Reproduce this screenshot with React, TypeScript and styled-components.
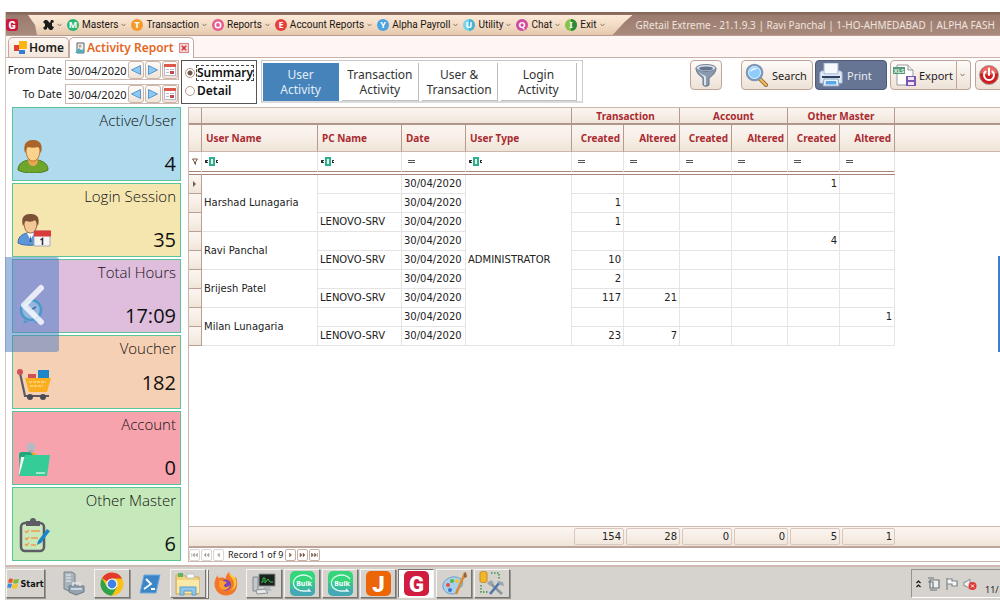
import React from "react";
import styled, { createGlobalStyle, css } from "styled-components";

const Global = createGlobalStyle`
  *, *::before, *::after { box-sizing: border-box; }
  html, body { margin: 0; background: #fff; }
  body { overflow-x: hidden; font-family: "Noto Sans", "Open Sans", sans-serif; font-size: 11px; color: #222; }
  button, input { font: inherit; color: inherit; margin: 0; padding: 0; border: 0; background: none; border-radius: 0; }
  button { cursor: pointer; white-space: nowrap; }
  svg { display: block; flex: none; }
`;

/* ---------- window frame ---------- */

const Page = styled.div`
  position: relative;
  display: flex;
  flex-direction: column;
  min-height: 100vh;
  padding: 12px 0 0 5px;
  overflow: hidden;
`;

const Window = styled.main`
  flex: 1;
  display: flex;
  flex-direction: column;
  border-left: 1px solid #d9c8c0;
`;

const TitleBar = styled.header`
  display: flex;
  height: 24px;
  padding-top: 3px;
  background: linear-gradient(#86695c 0, #86695c 2px, #9a7b6e 3px, #a98b7d 100%);
  border-bottom: 1px solid #b79d91;
`;

const AppButton = styled.button`
  flex: none;
  width: 22px;
  height: 20px;
`;

const MenuBar = styled.nav`
  display: flex;
  flex: none;
  align-items: center;
  gap: 5px;
  height: 20px;
  padding: 0 28px 0 15px;
  background: linear-gradient(#fbe9d8, #f3dcc5 50%, #e4c8ac);
  clip-path: polygon(0 0, 100% 0, calc(100% - 8px) 35%, calc(100% - 20px) 100%, 9px 100%, 7px 50%);
`;

const MenuItem = styled.button`
  display: flex;
  align-items: center;
  gap: 3px;
  height: 20px;
  font-family: Roboto, sans-serif;
  font-size: 10px;
  line-height: 14px;
  color: #1b1512;
`;

const TitleText = styled.h1`
  flex: 1;
  margin: 0 0 0 3px;
  font-size: 10px;
  font-weight: 400;
  line-height: 20px;
  white-space: nowrap;
  color: #f0e4de;
`;

const TabStrip = styled.div`
  display: flex;
  align-items: flex-end;
  height: 22px;
  padding-left: 2px;
  background: #fdf6f5;
  border-bottom: 1px solid #c9b1a8;
`;

const DocTab = styled.button<{ $active?: boolean }>`
  display: flex;
  align-items: center;
  gap: 2px;
  height: ${(p) => (p.$active ? 21 : 20)}px;
  padding: 0 4px 0 5px;
  margin-bottom: ${(p) => (p.$active ? -1 : 0)}px;
  border: 1px solid #c3a89d;
  border-bottom: 0;
  border-radius: 5px 5px 0 0;
  background: ${(p) => (p.$active ? "#fff" : "linear-gradient(#fdf8f3, #f3e6da)")};
  color: ${(p) => (p.$active ? "#e3661d" : "#1c1c1c")};
  font-size: 12px;
  font-weight: 600;
  line-height: 16px;
`;

/* ---------- toolbar ---------- */

const Toolbar = styled.div`
  display: flex;
  align-items: flex-start;
  height: 49px;
  padding-top: 2px;
  > * { flex: none; }
`;

const DateFilters = styled.div`
  display: grid;
  grid-template-columns: 56px 114px;
  grid-auto-rows: 20px;
  column-gap: 3px;
  row-gap: 4px;
  margin-right: 2px;
`;

const DateLabel = styled.label`
  text-align: right;
  white-space: nowrap;
  line-height: 20px;
`;

const DateBox = styled.div`
  display: flex;
  align-items: center;
  gap: 1px;
  border: 1px solid #cdb9b0;
  padding-left: 2px;
`;

const DateInput = styled.input`
  width: 59px;
  height: 18px;
  outline: 0;
`;

const MiniButton = styled.button`
  display: grid;
  place-items: center;
  width: 16px;
  height: 18px;
  border: 1px solid #cdb4a8;
  border-radius: 3px;
  background: linear-gradient(#fefcfa, #efe3d8);
`;

const RadioGroup = styled.fieldset`
  width: 76px;
  height: 44px;
  margin: 0 4px 0 0;
  padding: 3px;
  border: 1px solid #555;
  min-width: 0;
`;

const RadioLabel = styled.label<{ $focus?: boolean }>`
  display: flex;
  align-items: center;
  gap: 2px;
  height: 18px;
  font-size: 12px;
  font-weight: 600;
  color: #111;
  span {
    line-height: 14px;
    outline: ${(p) => (p.$focus ? "1px dashed #444" : "0")};
  }
`;

const Radio = styled.input`
  appearance: none;
  flex: none;
  width: 10px;
  height: 10px;
  border: 1px solid #b49a8e;
  border-radius: 50%;
  background: #fff;
  &:checked { background: radial-gradient(#6d574d 0 2px, #fff 3px); }
`;

const ViewTabs = styled.div`
  display: flex;
  gap: 3px;
  width: 322px;
  height: 43px;
  padding: 2px 5px 2px 1px;
  border: 1px solid #c9c9c9;
  border-bottom: 2px solid #dadada;
`;

const ViewTab = styled.button<{ $active?: boolean }>`
  flex: 1;
  height: 38px;
  white-space: pre-line;
  font-size: 12px;
  line-height: 15px;
  color: ${(p) => (p.$active ? "#e4eef8" : "#333")};
  background: ${(p) => (p.$active ? "#4683bb" : "#fff")};
  border-right: 1px solid ${(p) => (p.$active ? "#4683bb" : "#bdbdbd")};
  border-bottom: 1px solid ${(p) => (p.$active ? "#4683bb" : "#bdbdbd")};
`;

const Actions = styled.div`
  display: flex;
  flex: none;
  margin-left: 107px;
`;

const ToolButton = styled.button<{ $dark?: boolean; $w: number; $mr?: number }>`
  display: flex;
  flex: none;
  align-items: center;
  gap: 4px;
  width: ${(p) => p.$w}px;
  height: 30px;
  margin-right: ${(p) => p.$mr ?? 3}px;
  padding: 0 3px;
  border: 1px solid ${(p) => (p.$dark ? "#4f5b76" : "#bfa598")};
  border-radius: 4px;
  background: ${(p) => (p.$dark ? "#667593" : "linear-gradient(#fefaf7, #ede2d7)")};
  color: ${(p) => (p.$dark ? "#e6ebf3" : "#1c1c1c")};
`;

const SplitButton = styled.div`
  display: flex;
  margin-right: 4px;
  > :first-child { gap: 2px; padding-left: 2px; margin-right: 0; border-radius: 4px 0 0 4px; }
  > :last-child { border-left: 0; margin-right: 0; border-radius: 0 4px 4px 0; }
`;

/* ---------- tiles ---------- */

const Body = styled.div`
  flex: 1;
  display: flex;
  gap: 7px;
  padding: 0 0 3px 6px;
  border-bottom: 2px solid #ceb9b0;
`;

const Tiles = styled.aside`
  display: flex;
  flex-direction: column;
  gap: 2px;
  width: 169px;
  flex: none;
  padding-bottom: 1px;
`;

const Tile = styled.section<{ $bg: string; $middle?: boolean }>`
  flex: 1;
  display: grid;
  grid-template-columns: 36px 1fr;
  grid-template-rows: 20px 1fr;
  align-items: end;
  min-height: 74px;
  padding: 2px 4px 1px;
  border: 1px solid #5cc596;
  background: ${(p) => p.$bg};
  text-align: right;
  color: #111;
  svg { margin-bottom: 6px; }
  p { align-self: ${(p) => (p.$middle ? "center" : "end")}; }
`;

const TileTitle = styled.h2`
  grid-column: 1 / -1;
  align-self: start;
  margin: 0;
  font: 300 15px/20px "Open Sans", "Noto Sans", sans-serif;
`;

const TileValue = styled.p`
  margin: 0;
  font: 400 20px/30px "Open Sans", "Noto Sans", sans-serif;
`;

/* ---------- grid ---------- */

const GridPanel = styled.section`
  flex: 1;
  min-width: 0;
  display: flex;
  flex-direction: column;
  border: 1px solid #cdb6ac;
  border-right: 0;
`;

const headFill = css`background: linear-gradient(#fbf5f1, #f7efe7 50%, #efe4d8);`;

const Table = styled.table`
  width: 100%;
  table-layout: fixed;
  border-collapse: separate;
  border-spacing: 0;
  font: 10px/14px "DejaVu Sans", sans-serif;
  color: #222;
  td, th { padding: 0 3px; overflow: hidden; white-space: nowrap; text-align: left; }
`;

const BandCell = styled.th`
  height: 17px;
  && { text-align: center; }
  ${headFill}
  font: 700 10px/14px "Noto Sans", sans-serif;
  color: #a92b31;
  border-right: 1px solid #b59a90;
  border-bottom: 2px solid #b3968a;
  &:last-child { border-right: 0; }
`;

const HeadCell = styled.th<{ $num?: boolean }>`
  height: 27px;
  && { text-align: ${(p) => (p.$num ? "right" : "left")}; padding: 0 3px 0 4px; }
  ${headFill}
  font: 700 10px/14px "Noto Sans", sans-serif;
  color: #a92b31;
  border-right: 1px solid #b59a90;
  border-bottom: 1px solid #cdb6ac;
  &:last-child { border-right: 0; }
`;

const FilterCell = styled.td<{ $blank?: boolean; $equal?: boolean }>`
  height: 23px;
  && { padding-left: ${(p) => (p.$equal ? 6 : 3)}px; }
  border-right: 1px solid ${(p) => (p.$blank ? "transparent" : "#e6e2e0")};
  border-bottom: ${(p) => (p.$blank ? "0" : "4px double #a58579")};
`;

const Cell = styled.td<{ $num?: boolean }>`
  height: 19px;
  && { text-align: ${(p) => (p.$num ? "right" : "left")}; padding: 0 2px; }
  border-right: 1px solid #e6e4e3;
  border-bottom: 1px solid #e6e4e3;
`;

const MarkCell = styled.td`
  && { padding: 0 0 0 4px; }
  ${headFill}
  border-right: 1px solid #b99f94;
  border-bottom: 1px solid #b99f94;
`;

const Spacer = styled.div`flex: 1;`;

const Summary = styled.div`
  ${headFill}
  height: 22px;
  border-top: 1px solid #cdb6ac;
  border-bottom: 2px solid #bda398;
`;

const Total = styled.output`
  display: block;
  height: 17px;
  margin: 1px 0 0 2px;
  padding-right: 2px;
  border: 1px solid #d9c6bc;
  border-radius: 2px;
  line-height: 15px;
  text-align: right;
`;

const TotalCell = styled.td`
  && { padding: 0; }
`;

const Navigator = styled.nav`
  display: flex;
  align-items: center;
  gap: 1px;
  height: 13px;
  font-size: 9px;
  line-height: 12px;
  color: #222;
  span { margin: 0 1px 0 3px; white-space: nowrap; }
`;

const NavButton = styled.button<{ $off?: boolean }>`
  width: 11px;
  height: 12px;
  border: 1px solid ${(p) => (p.$off ? "#ddd5d1" : "#c9aea2")};
  border-radius: 2px;
  color: ${(p) => (p.$off ? "#a8a3a0" : "#7b5a4d")};
`;

/* ---------- carousel arrows over the window ---------- */

const PrevArrow = styled.button`
  position: absolute;
  left: 5px;
  top: 257px;
  display: grid;
  place-items: center;
  width: 54px;
  height: 95px;
  border-radius: 0 3px 3px 0;
  background: rgba(70, 120, 195, 0.5);
`;

const NextArrow = styled.button`
  position: absolute;
  right: 0;
  top: 256px;
  width: 2px;
  height: 96px;
  background: #3f7ecb;
`;

/* ---------- taskbar ---------- */

const Taskbar = styled.footer`
  display: flex;
  align-items: center;
  height: 33px;
  gap: 2px;
  padding-left: 1px;
  background: #d6d3cf;
`;

const raised = css`
  border: 1px solid;
  border-color: #f6f5f3 #77736f #77736f #f6f5f3;
  box-shadow: 1px 1px 0 #9a9692;
`;

const StartButton = styled.button`
  display: flex;
  align-items: center;
  justify-content: center;
  gap: 1px;
  width: 39px;
  height: 29px;
  margin-right: 9px;
  font: 700 9px/12px "DejaVu Sans Condensed", "DejaVu Sans", sans-serif;
  color: #111;
  ${raised}
`;

const TaskButton = styled.button<{ $look: "flat" | "raised" | "pressed" | "stack" }>`
  display: grid;
  place-items: center;
  width: 36px;
  height: 29px;
  ${(p) => (p.$look === "raised" || p.$look === "stack") && raised}
  ${(p) => p.$look === "stack" && css`box-shadow: 1px 0 0 #d6d3cf, 2px 0 0 #f6f5f3, 3px 1px 0 #77736f;`}
  ${(p) =>
    p.$look === "pressed" &&
    css`
      background: #fff;
      border: 1px solid;
      border-color: #77736f #f6f5f3 #f6f5f3 #77736f;
    `}
`;

const Tray = styled.div`
  display: flex;
  align-items: center;
  gap: 5px;
  width: 89px;
  height: 29px;
  margin-left: auto;
  padding-left: 3px;
  border: 1px solid;
  border-color: #96928e #96928e #fff #96928e;
  border-right: 0;
  time { align-self: flex-end; margin-left: 3px; font: 9px/14px "Noto Sans", sans-serif; white-space: nowrap; }
`;

/* ---------- drawings ---------- */

const Caret = () => (
  <svg width="5" height="4" viewBox="0 0 5 4"><path d="M.5.8 2.5 3 4.5.8" fill="none" stroke="#8c7767" /></svg>
);

const Letter = ({ c, bg, half, ring }: { c: string; bg: string; half?: string; ring?: boolean }) => (
  <svg width="12" height="12" viewBox="0 0 12 12">
    <circle cx="6" cy="6" r="6" fill={bg} />
    {half && <path d="M6 0a6 6 0 0 1 0 12z" fill={half} />}
    {ring ? (
      <circle cx="6" cy="6" r="2.7" fill={bg} stroke="#fff" strokeWidth="1.6" />
    ) : (
      <text x="6" y="9.4" textAnchor="middle" fontFamily="Noto Sans, sans-serif" fontWeight="700" fontSize="9" fill="#fff">{c}</text>
    )}
  </svg>
);

const Tri = ({ left }: { left?: boolean }) => (
  <svg width="12" height="12" viewBox="0 0 12 12">
    <path d={left ? "M10.5 1.5v9L1.5 6z" : "M1.5 1.5v9L10.5 6z"} fill="#8cc8f2" stroke="#5a96cf" />
  </svg>
);

const Calendar = () => (
  <svg width="12" height="12" viewBox="0 0 12 12">
    <rect x=".5" y=".5" width="11" height="11" fill="#fff" stroke="#b9b9c4" />
    <path d="M0 0h12v3H0z" fill="#dd5a4b" />
    <path d="M2 5h3v1H2zM2 8h3v1H2zM6 5h4v1H6z" fill="#b8bfd4" />
    <path d="M6 7h4v3H6z" fill="#c74646" />
  </svg>
);

const Funnel = () => (
  <svg width="24" height="24" viewBox="0 0 24 24">
    <path d="M2 5c0 5 4 8 7 10v7c1 1.600 5 1.600 6 0v-7c3-2 7-5 7-10z" fill="#8a99ad" stroke="#66758a" />
    <path d="M4 8c2 3 4 4 6 6v8h2V14c0-2-5-2-8-6z" fill="#dce4ee" />
    <ellipse cx="12" cy="5" rx="10" ry="3.500" fill="#d4dde8" stroke="#74849a" />
    <ellipse cx="12" cy="5.500" rx="7" ry="2" fill="#65758b" />
  </svg>
);

const Magnifier = () => (
  <svg width="23" height="24" viewBox="0 0 23 24">
    <path d="m14 15 7 7" stroke="#8a6a3c" strokeWidth="4" strokeLinecap="round" />
    <path d="m15 16 6 6" stroke="#f0b85a" strokeWidth="2.400" strokeLinecap="round" />
    <circle cx="9.500" cy="9.500" r="7.800" fill="#6db4f2" stroke="#7f95b5" strokeWidth="2" />
    <circle cx="9.500" cy="9.500" r="6" fill="#8fcbfb" stroke="#e4f1fd" />
    <path d="M5 9c1-4 5-5 8-3-3 0-5 1-8 3z" fill="#f3faff" />
  </svg>
);

const Printer = () => (
  <svg width="24" height="24" viewBox="0 0 24 24">
    <path d="M5 0h14v11H5z" fill="#f5f8fd" stroke="#a9b9d0" />
    <path d="M1 10c0-1 1-2 2-2h2v3h14V8h2c1 0 2 1 2 2v10H1z" fill="#dfe9f6" stroke="#b4c4dc" />
    <path d="M3 13h18v2H3z" fill="#2d3f5e" />
    <path d="M5 16h14l1 7H4z" fill="#eef4fc" stroke="#8fa4c4" />
    <path d="M7 18h10l.6 3.500H6.400z" fill="#58a7ec" />
  </svg>
);

const ExportIcon = () => (
  <svg width="24" height="22" viewBox="0 0 24 22">
    <path d="M4 1h11l5 5v15H4z" fill="#fff" stroke="#9a9a9a" />
    <path d="M15 1v5h5" fill="#eee" stroke="#9a9a9a" />
    <path d="M0 3h12v7H0z" fill="#559a78" />
    <text x="6" y="8.800" textAnchor="middle" fontFamily="Noto Sans, sans-serif" fontWeight="700" fontSize="6" fill="#e3f4ea">XLS</text>
    <path d="M13 12h10v10H13z" fill="#7d55b5" />
    <path d="M15 13h6v3h-6zM15 18h6v3h-6z" fill="#efe6fb" />
  </svg>
);

const Power = () => (
  <svg width="20" height="20" viewBox="0 0 20 20">
    <circle cx="10" cy="10" r="9.500" fill="#cf1d20" stroke="#a3a3a3" />
    <path d="M2 8a8 7 0 0 1 16 0c-5 2-11 2-16 0z" fill="#ea6a63" />
    <path d="M6.500 6.500a5 5 0 1 0 7 0M10 3.500V10" fill="none" stroke="#fff" strokeWidth="2" strokeLinecap="round" />
  </svg>
);

const HomeIcon = () => (
  <svg width="13" height="13" viewBox="0 0 13 13">
    <path d="M5 0h8v8H5z" fill="#fbb515" /><path d="M0 4h5v6H0z" fill="#e5402b" /><path d="M5 9h6v4H5z" fill="#2f7fd2" />
  </svg>
);

const ReportIcon = () => (
  <svg width="10" height="12" viewBox="0 0 10 12">
    <path d="M2 1h7v10H2z" fill="#eef3f6" stroke="#555f66" /><path d="M0 11 4 6l2 2 3-1v4z" fill="#58aab6" /><circle cx="5" cy="4" r="1.500" fill="#c9a17c" />
  </svg>
);

const CloseIcon = () => (
  <svg width="10" height="10" viewBox="0 0 9 9">
    <rect x=".5" y=".5" width="8" height="8" fill="#f9dcdb" stroke="#dc8180" /><path d="m2.500 2.500 4 4m0-4-4 4" stroke="#cf3838" strokeWidth="1.400" />
  </svg>
);

const Person = () => (
  <svg width="32" height="34" viewBox="0 0 32 34">
    <path d="M1 31c0-7 6-9 10-10h10c4 1 10 3 10 10-6 4-24 4-30 0z" fill="#6fa52c" stroke="#4c7d1b" />
    <path d="M11 19h10c0 6-2 8-5 8s-5-2-5-8z" fill="#e9a552" />
    <path d="M9 10c0-5 14-5 14 0 0 8-3 12-7 12s-7-4-7-12z" fill="#fbd28c" stroke="#b9762f" />
    <path d="M8 14C5 2 13 1 16 1s11 1 8 13c-1-1-1-5-3-6-3 1-7 1-10 0-2 1-2 5-3 6z" fill="#a9642b" />
  </svg>
);

const PersonCalendar = () => (
  <svg width="34" height="36" viewBox="0 0 34 36">
    <path d="M1 30c0-7 5-9 9-10h7c4 1 8 3 8 10-5 3-19 3-24 0z" fill="#5d97d8" stroke="#3a6cab" />
    <path d="m10 20 3.500 7 3.500-7z" fill="#fff" /><path d="m13.500 22 1 7h-2z" fill="#35558a" />
    <path d="M7 9c0-4 13-4 13 0 0 8-3 11-6.500 11S7 17 7 9z" fill="#f3c796" stroke="#9a6a46" />
    <path d="M6 13C3 2 10 1 13.500 1S24 2 21 13c-1-1-1-4-3-6-3 2-5 2-9 1-2 1-2 4-3 5z" fill="#7d5136" />
    <path d="M17 18h16v15H17z" fill="#f5f5f8" stroke="#a8a8b2" /><path d="M17 17.500h17v6H17z" fill="#d93a3a" />
    <path d="m23.500 27 2-1.500V32" fill="none" stroke="#333" strokeWidth="1.500" />
  </svg>
);

const Clock = () => (
  <svg width="34" height="36" viewBox="0 0 34 36">
    <path d="M8 31 6 34h5zM19 31l3 3h-5z" fill="#4cbcd2" />
    <circle cx="14" cy="21" r="10" fill="#e6f4fa" stroke="#4bbcd0" strokeWidth="2.500" />
    <path d="m10 17 4 4 5-3" fill="none" stroke="#3c5f80" strokeWidth="1.500" />
  </svg>
);

const Cart = () => (
  <svg width="34" height="32" viewBox="0 0 34 32">
    <path d="M21 1h11v8H21z" fill="#1c86cb" /><path d="M11 5h8v5h-8z" fill="#cf5059" />
    <path d="M8 9h26l-4 14H12z" fill="#fbaf1e" />
    <path d="M12 13h17M13 17h13" stroke="#fdd68a" strokeWidth="1.500" strokeDasharray="3 1" />
    <path d="M3 4 8 27h24" fill="none" stroke="#5c5964" strokeWidth="2.200" />
    <circle cx="3" cy="3" r="3" fill="#cf5059" /><circle cx="13" cy="28" r="3" fill="#4c4954" /><circle cx="26" cy="28" r="3" fill="#4c4954" />
  </svg>
);

const Folder = () => (
  <svg width="34" height="36" viewBox="0 0 34 36">
    <circle cx="14" cy="6" r="4.500" fill="#b6b9c2" /><path d="M7 18c0-9 14-9 14 0z" fill="#f6a51e" /><path d="M11 9h6l-3 4z" fill="#a7abb6" />
    <path d="M2 14c0-2 1-3 3-3h8l3 3h14v20H3z" fill="#22a67b" /><path d="M4 16h24v17H2z" fill="#f2fbf7" />
    <path d="M8 14h25l-3 21H2z" fill="#35cc97" /><path d="M19 32h9" stroke="#c5f3e2" strokeWidth="1.500" />
  </svg>
);

const Clipboard = () => (
  <svg width="34" height="36" viewBox="0 0 34 36">
    <rect x="4" y="6" width="23" height="28" rx="4" fill="#c9e9bd" stroke="#5d5b66" strokeWidth="2.500" />
    <path d="M9 9V4h4a3 3 0 0 1 6 0h4v5z" fill="#5d5b66" />
    <path d="m8 14 1.500 1.500L12 13m-4 8 1.500 1.500L12 20m-4 7 1.500 1.500L12 26M14 14h9M14 21h7M14 28h5" fill="none" stroke="#ef9a4d" strokeWidth="1.400" />
    <path d="m21 24 9-12 3 2-9 12-4 2z" fill="#1c86cb" />
  </svg>
);

const AbcIcon = () => (
  <svg width="14" height="9" viewBox="0 0 14 9">
    <path d="M4 0h6v9H4z" fill="#2fae8d" /><path d="M6 2h2v5H6z" fill="#dff5ee" />
    <path d="M0 3h3v1H2v1h1v1H0zM11 3h2v1h-1v1h1v1h-2z" fill="#333" />
  </svg>
);

const EqualIcon = () => (
  <svg width="8" height="5" viewBox="0 0 8 5"><path d="M0 1h7v1H0zM0 3h7v1H0z" fill="#555" /></svg>
);

const WindowsFlag = () => (
  <svg width="12" height="12" viewBox="0 0 12 12">
    <path d="M2 1c2-1 3 0 4 0L5 5c-1 0-2-1-4 0z" fill="#e8542b" /><path d="M7 1c2 1 3 0 5 0l-1 4c-2 1-3 1-5 0z" fill="#80bb35" />
    <path d="M1 6c2-1 3 0 4 0l-1 4c-1 0-2-1-4 0z" fill="#3d8bd8" /><path d="M6 6c2 1 3 0 5 0l-1 4c-2 1-3 1-5 0z" fill="#f8c22c" />
  </svg>
);

const Server = () => (
  <svg width="24" height="25" viewBox="0 0 24 25">
    <path d="M2 1h8l3 2v16l-3 2-8-3z" fill="#a8b2ba" stroke="#7a858e" /><path d="M4 4h5M4 7h5M4 10h5" stroke="#eef3f6" />
    <path d="M7 15h15v6l-8 3-7-3z" fill="#93a3b0" stroke="#6d7a85" /><path d="M11 15v-3h7v3M9 18h11" fill="none" stroke="#dfe6ec" strokeWidth="1.500" />
  </svg>
);

const Chrome = () => (
  <svg width="24" height="24" viewBox="0 0 24 24">
    <circle cx="12" cy="12" r="11.500" fill="#fbc116" />
    <path d="M12 12 2 6.300A11.500 11.500 0 0 1 22 6.500H12z" fill="#e23b2e" />
    <path d="M2 6.300A11.500 11.500 0 0 0 12 23.500l5-8.500H7z" fill="#2fa24c" />
    <circle cx="12" cy="12" r="5.600" fill="#fff" /><circle cx="12" cy="12" r="4.400" fill="#3e82e8" />
  </svg>
);

const PowerShell = () => (
  <svg width="22" height="20" viewBox="0 0 22 20">
    <path d="M5 1h16l-4 18H1z" fill="#3c86c8" stroke="#6cabe0" /><path d="m7 5 5 5-7 5M12 15h4" fill="none" stroke="#fff" strokeWidth="1.800" />
  </svg>
);

const Explorer = () => (
  <svg width="26" height="24" viewBox="0 0 26 24">
    <path d="M1 3h8l2 2h13v17H1z" fill="#f2d37c" stroke="#d2a94a" /><path d="M3 1h5v4H3z" fill="#5db36a" /><path d="M12 2h7v4h-7z" fill="#fff" stroke="#b9c4ce" />
    <path d="M2 8h22v13H2z" fill="#fbe9aa" /><path d="M5 23v-8h16v8h-4v-4H9v4z" fill="#8fc6ea" stroke="#5a9fcd" />
  </svg>
);

const Firefox = () => (
  <svg width="24" height="24" viewBox="0 0 24 24">
    <path d="M12 23.500C5 23.500.5 18 .5 12c0-4 2-7 3-9 0 2 1 3 2 3 3-1 5 0 6 1 0-3 2-6 4-7 0 3 3 4 5 7 1-1 1-2 1-3 4 9 1 19.500-9.500 19.500z" fill="#f4762a" />
    <path d="M15 1c0 4 5 5 5 11 0 3-2 6-5 7 7-1 9-8 6-13-1-2-5-3-6-5z" fill="#fcc832" /><circle cx="11.500" cy="13" r="5.500" fill="#7347b8" />
    <path d="M5 9c3-2 5 1 8 1-1 2-3 2-3 4 1 2 4 1 6-1-1 6-9 7-11 1z" fill="#fb9d2f" />
  </svg>
);

const Terminal = () => (
  <svg width="25" height="22" viewBox="0 0 25 22">
    <path d="M7 1h16v12H7z" fill="#1b231f" stroke="#8a9094" /><path d="M9 9h2V5h2v5l3-4 2 3h3" fill="none" stroke="#33c24b" />
    <path d="M12 14h6l2 4h-9z" fill="#b5babd" /><path d="M1 4h5v14H1z" fill="#c3c9cd" stroke="#80878c" /><path d="m4 17 9-1 3 4-11 1z" fill="#e6e9eb" stroke="#8b9195" />
  </svg>
);

const Bulk = () => (
  <svg width="25" height="25" viewBox="0 0 25 25">
    <rect width="25" height="25" rx="5" fill="#35d57c" /><path d="M0 17h25v3a5 5 0 0 1-5 5H5a5 5 0 0 1-5-5z" fill="#45a9b5" /><path d="M0 12h25v6H0z" fill="#38bf98" />
    <path d="M22 8A10 8 0 1 0 14 20h6l-2-2" fill="none" stroke="#dff8ee" strokeWidth="1.300" />
    <text x="14" y="15" textAnchor="middle" fontFamily="Noto Sans, sans-serif" fontWeight="700" fontSize="7" fill="#fff">Bulk</text>
  </svg>
);

const Badge = ({ c, bg, s = 25 }: { c: string; bg: string; s?: number }) => (
  <svg width={s} height={s} viewBox="0 0 25 25">
    <rect width="25" height="25" rx="5" fill={bg} />
    <text x="12.500" y="20.500" textAnchor="middle" fontFamily="Roboto, sans-serif" fontWeight="900" fontSize="22" fill="#fff">{c}</text>
  </svg>
);

const Palette = () => (
  <svg width="25" height="24" viewBox="0 0 25 24">
    <path d="M1 14C1 8 8 4 14 5c6 1 8 5 6 9-1 2-4 1-5 3s0 5-4 5C5 22 1 19 1 14z" fill="#a8d0ec" stroke="#6b9fc6" />
    <circle cx="6" cy="13" r="2" fill="#e2503f" /><circle cx="10" cy="9" r="2" fill="#58b14a" /><circle cx="15" cy="9" r="2" fill="#f3c32f" /><circle cx="8" cy="18" r="2" fill="#3d74cf" />
    <path d="m23 1-9 21" stroke="#d98a33" strokeWidth="2.500" /><path d="m22 1 2-1 1 5-3 1z" fill="#9b6430" />
  </svg>
);

const DbTools = () => (
  <svg width="26" height="25" viewBox="0 0 26 25">
    <path d="M1 2c0-2 7-2 7 0v8c0 2-7 2-7 0z" fill="#f0b62c" stroke="#c98b16" /><path d="M12 2h8v6M2 14v7h8" fill="none" stroke="#3d9145" strokeWidth="1.500" strokeDasharray="1.500 1.500" />
    <path d="m11 12 12 11" stroke="#8a949d" strokeWidth="2.600" /><path d="M21 11 11 23" stroke="#4f78a8" strokeWidth="2.600" /><path d="m8 12 4-3 3 3-4 3zM18 10l6 1 1 4-4-1z" fill="#9aa5ae" />
  </svg>
);

const TrayIcons = () => (
  <>
    <svg width="7" height="9" viewBox="0 0 7 9"><path d="m1.500 4 2-2 2 2m-4 4 2-2 2 2" fill="none" stroke="#111" strokeWidth="1.200" /></svg>
    <svg width="13" height="14" viewBox="0 0 13 14"><path d="M3 3h9v8H3zM1 1h6M3 13h7M1 5h5v6" fill="#eef0f1" stroke="#6c7276" strokeWidth="1.200" /></svg>
    <svg width="13" height="14" viewBox="0 0 13 14"><path d="M2 1v12M2 2h5v2h5v5H7V7H2" fill="#f7f7f7" stroke="#7f8589" strokeWidth="1.200" /></svg>
    <svg width="14" height="14" viewBox="0 0 14 14"><path d="M1 5h2l4-3v10L3 9H1z" fill="#f2f2f2" stroke="#85898c" /><circle cx="9.500" cy="9" r="4" fill="#dd3a35" /><path d="m8 7.500 3 3m0-3-3 3" stroke="#fff" /></svg>
  </>
);

/* ---------- data ---------- */

const menus = [
  { label: "Masters", icon: <Letter c="M" bg="#2fb573" /> },
  { label: "Transaction", icon: <Letter c="T" bg="#f39a2b" /> },
  { label: "Reports", icon: <Letter c="O" bg="#e65a8e" ring /> },
  { label: "Account Reports", icon: <Letter c="E" bg="#e8403c" /> },
  { label: "Alpha Payroll", icon: <Letter c="Y" bg="#4ba3e0" /> },
  { label: "Utility", icon: <Letter c="U" bg="#79d3e8" half="#45b3d6" /> },
  { label: "Chat", icon: <Letter c="Q" bg="#cf4a9d" /> },
  { label: "Exit", icon: <Letter c="I" bg="#84c441" half="#2c8a3c" /> },
];

const views = ["User\nActivity", "Transaction\nActivity", "User &\nTransaction", "Login\nActivity"];

const tiles = [
  { title: "Active/User", value: "4", bg: "#b0daed", icon: <Person /> },
  { title: "Login Session", value: "35", bg: "#f5e6b0", icon: <PersonCalendar /> },
  { title: "Total Hours", value: "17:09", bg: "#dfbedd", icon: <Clock /> },
  { title: "Voucher", value: "182", bg: "#f6d0b4", icon: <Cart />, middle: true },
  { title: "Account", value: "0", bg: "#f7a3ae", icon: <Folder /> },
  { title: "Other Master", value: "6", bg: "#c6e9bb", icon: <Clipboard /> },
];

const columnWidths = [13, 116, 84, 64, 106, 52, 56, 52, 56, 52, 55];
const D = "30/04/2020";
const PC = "LENOVO-SRV";

type Row = { user?: string; span?: number; pc: string; n: string[] };
const rows: Row[] = [
  { user: "Harshad Lunagaria", span: 3, pc: "", n: ["", "", "", "", "1", ""] },
  { pc: "", n: ["1", "", "", "", "", ""] },
  { pc: PC, n: ["1", "", "", "", "", ""] },
  { user: "Ravi Panchal", span: 2, pc: "", n: ["", "", "", "", "4", ""] },
  { pc: PC, n: ["10", "", "", "", "", ""] },
  { user: "Brijesh Patel", span: 2, pc: "", n: ["2", "", "", "", "", ""] },
  { pc: PC, n: ["117", "21", "", "", "", ""] },
  { user: "Milan Lunagaria", span: 2, pc: "", n: ["", "", "", "", "", "1"] },
  { pc: PC, n: ["23", "7", "", "", "", ""] },
];

const totals = ["154", "28", "0", "0", "5", "1"];

const Columns = () => (
  <colgroup>
    {columnWidths.map((w, i) => <col key={i} width={w} />)}
    <col />
  </colgroup>
);

const DateRow = ({ id, label }: { id: string; label: string }) => (
  <>
    <DateLabel htmlFor={id}>{label}</DateLabel>
    <DateBox>
      <DateInput id={id} defaultValue={D} />
      <MiniButton aria-label="Previous day"><Tri left /></MiniButton>
      <MiniButton aria-label="Next day"><Tri /></MiniButton>
      <MiniButton aria-label="Pick a date"><Calendar /></MiniButton>
    </DateBox>
  </>
);

const NavArrow = ({ label, d, off }: { label: string; d: string; off?: boolean }) => (
  <NavButton aria-label={label} $off={off} disabled={off}>
    <svg width="9" height="10" viewBox="0 0 9 10"><path d={d} fill="currentColor" stroke="currentColor" strokeWidth=".5" /></svg>
  </NavButton>
);

const ActivityGrid = () => (
  <GridPanel>
    <Table>
      <Columns />
      <thead>
        <tr>
          <BandCell />
          <BandCell colSpan={4} />
          <BandCell colSpan={2}>Transaction</BandCell>
          <BandCell colSpan={2}>Account</BandCell>
          <BandCell colSpan={2}>Other Master</BandCell>
          <BandCell />
        </tr>
        <tr>
          <HeadCell />
          {["User Name", "PC Name", "Date", "User Type"].map((h) => <HeadCell key={h}>{h}</HeadCell>)}
          {totals.map((_, i) => <HeadCell key={i} $num>{i % 2 ? "Altered" : "Created"}</HeadCell>)}
          <HeadCell />
        </tr>
      </thead>
      <tbody>
        <tr>
          <FilterCell>
            <svg width="6" height="7" viewBox="0 0 6 7"><path d="M.5 1h5L3.500 4v2.500l-1-1V4z" fill="none" stroke="#7b5a4d" /></svg>
          </FilterCell>
          {[true, true, false, true, false, false, false, false, false, false].map((abc, i) => (
            <FilterCell key={i} $equal={!abc}>{abc ? <AbcIcon /> : <EqualIcon />}</FilterCell>
          ))}
          <FilterCell $blank />
        </tr>
        {rows.map((r, i) => (
          <tr key={i}>
            <MarkCell>
              {i === 0 && <svg width="4" height="6" viewBox="0 0 4 6"><path d="M0 0v6l3-3z" fill="#7b5a4d" /></svg>}
            </MarkCell>
            {r.user && <Cell rowSpan={r.span}>{r.user}</Cell>}
            <Cell>{r.pc}</Cell>
            <Cell>{D}</Cell>
            {i === 0 && <Cell rowSpan={rows.length}>ADMINISTRATOR</Cell>}
            {r.n.map((v, k) => <Cell key={k} $num>{v}</Cell>)}
          </tr>
        ))}
      </tbody>
    </Table>
    <Spacer />
    <Summary>
      <Table>
        <Columns />
        <tbody>
          <tr>
            <TotalCell colSpan={5} />
            {totals.map((t, i) => <TotalCell key={i}><Total>{t}</Total></TotalCell>)}
            <TotalCell />
          </tr>
        </tbody>
      </Table>
    </Summary>
    <Navigator aria-label="Records">
      <NavArrow label="First" off d="M1.500 3v4M4.500 3 2.500 5l2 2zM7.500 3l-2 2 2 2z" />
      <NavArrow label="Previous page" off d="M4 3 2 5l2 2zM7 3 5 5l2 2z" />
      <NavArrow label="Previous" off d="M5.500 3l-2 2 2 2z" />
      <span>Record 1 of 9</span>
      <NavArrow label="Next" d="M3.500 3l2 2-2 2z" />
      <NavArrow label="Next page" d="M2 3l2 2-2 2zM5 3l2 2-2 2z" />
      <NavArrow label="Last" d="M1.500 3l2 2-2 2zM4.500 3l2 2-2 2zM7.500 3v4" />
    </Navigator>
  </GridPanel>
);

const tasks: { label: string; look: "flat" | "raised" | "pressed" | "stack"; icon: React.ReactNode }[] = [
  { label: "Server Manager", look: "flat", icon: <Server /> },
  { label: "Chrome", look: "raised", icon: <Chrome /> },
  { label: "PowerShell", look: "flat", icon: <PowerShell /> },
  { label: "Explorer", look: "stack", icon: <Explorer /> },
  { label: "Firefox", look: "flat", icon: <Firefox /> },
  { label: "Monitor", look: "raised", icon: <Terminal /> },
  { label: "Bulk messages", look: "raised", icon: <Bulk /> },
  { label: "Bulk messages 2", look: "raised", icon: <Bulk /> },
  { label: "Jewellery", look: "raised", icon: <Badge c="J" bg="#ec6608" /> },
  { label: "GRetail", look: "pressed", icon: <Badge c="G" bg="#d01c3f" /> },
  { label: "Paint", look: "raised", icon: <Palette /> },
  { label: "Database tools", look: "raised", icon: <DbTools /> },
];

export default function App() {
  return (
    <Page>
      <Global />
      <Window>
        <TitleBar>
          <AppButton aria-label="Application menu"><Badge c="G" bg="#c9183c" s={12} /></AppButton>
          <MenuBar>
            <MenuItem aria-label="Quick access">
              <svg width="11" height="10" viewBox="0 0 11 10"><path d="M0 2 2 0h2l3 3 1-3h2l1 2-2 1v3l2 1-2 3H7L4 7v2L2 10 0 8l2-2V4z" fill="#1c1c1c" /></svg>
              <Caret />
            </MenuItem>
            {menus.map((m) => (
              <MenuItem key={m.label}>{m.icon}{m.label}<Caret /></MenuItem>
            ))}
          </MenuBar>
          <TitleText>GRetail Extreme - 21.1.9.3 | Ravi Panchal | 1-HO-AHMEDABAD | ALPHA FASH</TitleText>
        </TitleBar>
        <TabStrip>
          <DocTab><HomeIcon />Home</DocTab>
          <DocTab $active><ReportIcon />Activity Report&nbsp;<CloseIcon /></DocTab>
        </TabStrip>
        <Toolbar>
          <DateFilters>
            <DateRow id="from" label="From Date" />
            <DateRow id="to" label="To Date" />
          </DateFilters>
          <RadioGroup aria-label="Report kind">
            <RadioLabel $focus><Radio type="radio" name="kind" defaultChecked /><span>Summary</span></RadioLabel>
            <RadioLabel><Radio type="radio" name="kind" /><span>Detail</span></RadioLabel>
          </RadioGroup>
          <ViewTabs>
            {views.map((v, i) => <ViewTab key={v} $active={i === 0}>{v}</ViewTab>)}
          </ViewTabs>
          <Actions>
            <ToolButton $w={32} $mr={19} aria-label="Filter"><Funnel /></ToolButton>
            <ToolButton $w={72} $mr={2}><Magnifier />Search</ToolButton>
            <ToolButton $w={72} $dark><Printer />Print</ToolButton>
            <SplitButton>
              <ToolButton $w={67}><ExportIcon />Export</ToolButton>
              <ToolButton $w={14} aria-label="Export options"><Caret /></ToolButton>
            </SplitButton>
            <ToolButton $w={30} $mr={0} aria-label="Close"><Power /></ToolButton>
          </Actions>
        </Toolbar>
        <Body>
          <Tiles>
            {tiles.map((t) => (
              <Tile key={t.title} $bg={t.bg} $middle={t.middle}>
                <TileTitle>{t.title}</TileTitle>
                {t.icon}
                <TileValue>{t.value}</TileValue>
              </Tile>
            ))}
          </Tiles>
          <ActivityGrid />
        </Body>
      </Window>
      <Taskbar>
        <StartButton><WindowsFlag />Start</StartButton>
        {tasks.map((t) => (
          <TaskButton key={t.label} $look={t.look} aria-label={t.label}>{t.icon}</TaskButton>
        ))}
        <Tray><TrayIcons /><time>11/</time></Tray>
      </Taskbar>
      <PrevArrow aria-label="Previous">
        <svg width="26" height="44" viewBox="0 0 26 44"><path d="M22 5 5 22l17 17" fill="none" stroke="#fff" strokeOpacity=".8" strokeWidth="6" strokeLinecap="round" strokeLinejoin="round" /></svg>
      </PrevArrow>
      <NextArrow aria-label="Next" />
    </Page>
  );
}
